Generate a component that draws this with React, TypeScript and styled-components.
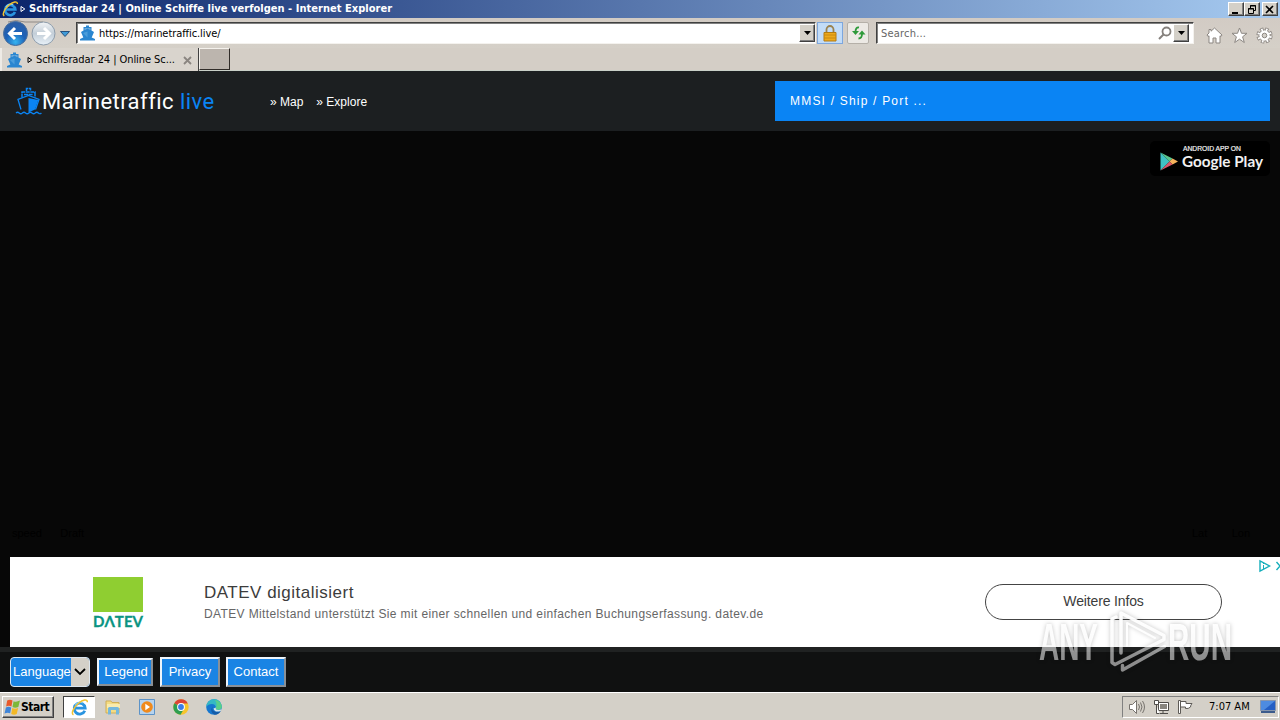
import React from "react";
import styled, { createGlobalStyle } from "styled-components";

const colors = {
  chrome: "#d4d0c8",
  dark: "#1c1f21",
  blue: "#0a84f4",
  button: "#1a84e4",
};

const ui = `"DejaVu Sans Condensed", "DejaVu Sans", sans-serif`;
const arial = `"Liberation Sans", Arial, sans-serif`;
const roboto = `Roboto, sans-serif`;

const GlobalStyle = createGlobalStyle`
  * {
    box-sizing: border-box;
  }
  body {
    margin: 0;
    overflow: hidden;
    background: #070707;
  }
  svg {
    display: block;
    flex: none;
    overflow: visible;
  }
`;

const Screen = styled.div`
  position: relative;
  display: flex;
  flex-direction: column;
  width: 1280px;
  height: 720px;
  overflow: hidden;
`;

const Text = styled.span<{
  $size?: number;
  $spacing?: number;
  $color?: string;
  $bold?: boolean;
  $font?: string;
}>`
  font-family: ${(p) => p.$font || ui};
  font-size: ${(p) => p.$size || 11}px;
  font-weight: ${(p) => (p.$bold ? 700 : 400)};
  letter-spacing: ${(p) => p.$spacing || 0}px;
  color: ${(p) => p.$color || "#000"};
  white-space: pre;
  line-height: 1.2;
`;

/* ---------- window chrome ---------- */

const TitleBar = styled.div`
  display: flex;
  align-items: center;
  flex: none;
  height: 18px;
  padding: 0 2px;
  background: linear-gradient(90deg, #0a246a 0%, #a6caf0 100%);
`;

const TitleText = styled.div`
  display: flex;
  align-items: center;
  flex: 1;
  gap: 3px;
  padding-left: 2px;
`;

const WindowButtons = styled.div`
  display: flex;
  & > :last-child {
    margin-left: 2px;
  }
`;

const WindowButton = styled.div`
  display: flex;
  align-items: center;
  justify-content: center;
  width: 16px;
  height: 14px;
  background: ${colors.chrome};
  border: 1px solid;
  border-color: #fff #404040 #404040 #fff;
  box-shadow: inset -1px -1px #808080;
`;

const NavBar = styled.div`
  display: flex;
  align-items: center;
  flex: none;
  height: 30px;
  padding: 0 7px 0 3px;
  background: linear-gradient(#d2cbc4, #d5d0c8);
`;

const Field = styled.div<{ $width: number; $ml: number; $right?: number }>`
  display: flex;
  align-items: center;
  width: ${(p) => p.$width}px;
  height: 22px;
  margin-left: ${(p) => p.$ml}px;
  padding: 0 ${(p) => p.$right || 0}px 0 3px;
  background: #fff;
  border: 1px solid;
  border-color: #404040 #f4f2ee #f4f2ee #404040;
  box-shadow: inset 1px 1px #808080;
`;

const FieldText = styled.div<{ $left?: number }>`
  display: flex;
  flex: 1;
  padding-left: ${(p) => p.$left || 0}px;
  padding-top: 2px;
`;

const DropButton = styled.div`
  display: flex;
  align-items: center;
  justify-content: center;
  width: 16px;
  height: 18px;
  background: ${colors.chrome};
  border: 1px solid;
  border-color: #fff #404040 #404040 #fff;
  box-shadow: inset -1px -1px #808080;
`;

const ToolButton = styled.div<{ $active?: boolean; $width: number; $ml: number }>`
  display: flex;
  align-items: center;
  justify-content: center;
  width: ${(p) => p.$width}px;
  height: 22px;
  margin-left: ${(p) => p.$ml}px;
  background: ${(p) => (p.$active ? "#c2dcf8" : "#ece9e4")};
  border: 1px solid ${(p) => (p.$active ? "#7da7de" : "#b5b0a8")};
  border-radius: ${(p) => (p.$active ? 0 : 2)}px;
`;

const Tools = styled.div`
  display: flex;
  align-items: center;
  gap: 8px;
  margin-left: 12px;
  padding-top: 4px;
`;

const TabBar = styled.div`
  display: flex;
  flex: none;
  height: 23px;
  background: #d4cec6;
  border-bottom: 1px solid #c9d0c8;
`;

const Tab = styled.div`
  display: flex;
  align-items: center;
  width: 199px;
  height: 23px;
  padding: 1px 6px 0 5px;
  background: #d9d4cd;
  border-left: 2px solid #eeebe6;
  border-right: 1px solid #404040;
`;

const TabTitle = styled.div`
  display: flex;
  align-items: center;
  gap: 3px;
  flex: 1;
  padding-left: 5px;
`;

const NewTab = styled.div`
  width: 31px;
  height: 22px;
  background: #bcb5ae;
  border: 1px solid;
  border-color: #f4f1ec #302c28 #302c28 #f4f1ec;
`;

/* ---------- site ---------- */

const SiteHeader = styled.header`
  display: flex;
  align-items: center;
  flex: none;
  height: 60px;
  padding: 0 10px 0 15px;
  background: ${colors.dark};
`;

const Logo = styled.div`
  display: flex;
  align-items: center;
  width: 255px;
`;

const LogoText = styled.div`
  padding-top: 2px;
`;

const Menu = styled.nav`
  display: flex;
  flex: 1;
  gap: 13px;
  padding-top: 2px;
`;

const SearchBox = styled.div`
  display: flex;
  align-items: center;
  width: 495px;
  height: 40px;
  padding-left: 15px;
  background: ${colors.blue};
`;

const MapArea = styled.main`
  display: flex;
  flex-direction: column;
  align-items: flex-end;
  justify-content: space-between;
  flex: none;
  height: 426px;
  padding: 10px 10px 17px;
  background: #070707;
`;

const PlayBadge = styled.div`
  width: 120px;
  height: 35px;
  background: #000;
  border-radius: 5px;
`;

const MapLabels = styled.div`
  display: flex;
  justify-content: space-between;
  width: 100%;
  padding: 0 20px 0 2px;
`;

const Ad = styled.section`
  display: flex;
  align-items: center;
  flex: none;
  height: 90px;
  margin-left: 10px;
  background: #fff;
`;

const AdLogo = styled.div`
  width: 194px;
  padding: 1px 0 0 83px;
`;

const AdCopy = styled.div`
  display: flex;
  flex-direction: column;
  gap: 4px;
  flex: 1;
`;

const AdButton = styled.div`
  display: flex;
  align-items: center;
  justify-content: center;
  width: 237px;
  height: 36px;
  padding-bottom: 2px;
  border: 1px solid #444;
  border-radius: 18px;
`;

const AdChoices = styled.div`
  display: flex;
  align-self: flex-start;
  width: 58px;
  padding: 3px 0 0 36px;
`;

const Footer = styled.footer`
  display: flex;
  flex: none;
  height: 45px;
  padding: 5px 10px 0;
  background: #101111;
  border-top: 5px solid #202222;
`;

const Language = styled.div`
  display: flex;
  align-items: center;
  width: 80px;
  height: 30px;
  padding-left: 2px;
  margin-right: 7px;
  overflow: hidden;
  background: ${colors.button};
  border: 1px solid #dde6ee;
  border-radius: 4px;
`;

const LanguageLabel = styled.div`
  width: 58px;
  padding-bottom: 2px;
`;

const LanguageArrow = styled.div`
  display: flex;
  align-items: center;
  justify-content: center;
  width: 18px;
  height: 28px;
  background: ${colors.chrome};
`;

const FooterButton = styled.div<{ $width: number; $small?: boolean }>`
  display: flex;
  align-items: center;
  justify-content: center;
  width: ${(p) => p.$width}px;
  height: ${(p) => (p.$small ? 28 : 30)}px;
  margin: ${(p) => (p.$small ? "1px 7px 0 0" : "0 6px 0 0")};
  padding-left: ${(p) => (p.$small ? 2 : 0)}px;
  background: ${colors.button};
  border: 2px solid;
  border-color: #eef4fa #8a9096 #8a9096 #eef4fa;
`;

/* ---------- taskbar ---------- */

const Taskbar = styled.div`
  display: flex;
  align-items: center;
  flex: none;
  height: 28px;
  padding: 1px 1px 0 2px;
  background: ${colors.chrome};
  border-top: 1px solid #fff;
`;

const StartButton = styled.div`
  display: flex;
  align-items: center;
  width: 52px;
  height: 22px;
  padding-left: 1px;
  border: 1px solid;
  border-color: #fff #404040 #404040 #fff;
  box-shadow: inset -1px -1px #808080;
`;

const ActiveApp = styled.div`
  display: flex;
  align-items: center;
  justify-content: center;
  width: 32px;
  height: 22px;
  margin-left: 9px;
  background: #fff;
  border: 1px solid;
  border-color: #404040 #fff #fff #404040;
`;

const Apps = styled.div`
  display: flex;
  align-items: center;
  flex: 1;
  gap: 17.5px;
  padding-left: 8.5px;
`;

const Tray = styled.div`
  display: flex;
  align-items: center;
  width: 157px;
  height: 22px;
  padding-left: 5px;
  border: 1px solid;
  border-color: #808080 #fff #fff #808080;
`;

const TrayIcons = styled.div`
  display: flex;
  gap: 7px;
  width: 81px;
`;

const Monitor = styled.div`
  margin-left: 10px;
`;

const Watermark = styled.div`
  position: absolute;
  left: 1030px;
  top: 600px;
  filter: drop-shadow(0 0 2px rgba(0, 0, 0, 0.25));
`;

/* ---------- icons ---------- */

const IeIcon = ({ size = 17 }: { size?: number }) => (
  <svg width={size} height={size} viewBox="0 0 18 18" fill="none">
    <path
      d="M14.6 12.4A5.8 5.8 0 1 1 15 9.6H5"
      stroke="#2a94e0"
      strokeWidth="3"
    />
    <path d="M12.5 4.2A5.6 5.6 0 0 0 4.4 7" stroke="#7ccbf6" strokeWidth="1.4" />
    <path
      d="M2.6 16.8C-.2 15.4 2.6 9 8 4.5 12.5.8 17.5-.4 17.3 3.4"
      stroke="#f2c230"
      strokeWidth="1.6"
    />
  </svg>
);

const FaviconShip = () => (
  <svg width="15" height="16" viewBox="0 0 15 16">
    <path
      d="M6 .5h3V2h2.5v3.5L14 7l-2.300 5.500L15 14v1.500H0V14l3.300-1.500L1 7l2.500-1.500V2H6z"
      fill="#2a86d0"
    />
    <path d="M4.5 3.400h6v1.400l-3-1-3 1z" fill="#a9cbe6" />
    <path d="M7.5 6.500v6L3 8z" fill="#4b9ddb" />
  </svg>
);

const LogoShip = () => (
  <svg width="27" height="28" viewBox="0 0 27 28" fill="none">
    <path
      d="M11.5 4V1.5h4V4M7 10.5V5h13v5.5M9 7.500h9"
      stroke={colors.blue}
      strokeWidth="1.5"
      strokeDasharray="4 .6"
    />
    <path
      d="M6 22.500l-3-10 10.500-4 10.500 4-3.500 10"
      stroke={colors.blue}
      strokeWidth="1.3"
    />
    <path d="M13.5 11l9.800 2-3.300 9.500-6.500 3z" fill={colors.blue} />
    <path
      d="M1 26q1.600-1.500 3.200 0t3.200 0 3.200 0 3.200 0 3.200 0 3.200 0 3.200 0 3 0"
      stroke={colors.blue}
      strokeWidth="1.2"
    />
  </svg>
);

const NavArrows = () => (
  <svg width="68" height="30" viewBox="0 0 68 30">
    <defs>
      <radialGradient id="back" cx=".5" cy=".85" r=".8">
        <stop offset="0" stopColor="#37b4f0" />
        <stop offset=".5" stopColor="#1d62b8" />
        <stop offset="1" stopColor="#2b5ea6" />
      </radialGradient>
      <linearGradient id="fwd" x2="0" y2="1">
        <stop offset="0" stopColor="#f2f4f6" />
        <stop offset=".5" stopColor="#c3ced8" />
        <stop offset="1" stopColor="#e8f1f8" />
      </linearGradient>
    </defs>
    <path d="M5 4Q13 1 22 4h18" stroke="#8f8a86" fill="none" />
    <circle cx="12.5" cy="15.5" r="12" fill="url(#back)" stroke="#4a6f9c" />
    <path
      d="M19 15.5H7M12 10l-5.5 5.5L12 21"
      stroke="#fff"
      strokeWidth="3"
      fill="none"
    />
    <circle cx="40.5" cy="15.5" r="11.5" fill="url(#fwd)" stroke="#8d9cab" />
    <path
      d="M34 15.5h12M41 10l5.5 5.5L41 21"
      stroke="#fff"
      strokeWidth="3"
      fill="none"
    />
    <path d="M57.5 13.5h9l-4.5 5z" fill="#3f9bd8" stroke="#27517e" />
  </svg>
);

const Caret = () => (
  <svg width="7" height="4" viewBox="0 0 7 4">
    <path d="M0 0h7L3.5 4z" fill="#000" />
  </svg>
);

const Triangle = ({ color }: { color: string }) => (
  <svg width="6" height="8" viewBox="0 0 6 8">
    <path d="M1 1.500v5L4.800 4z" fill="none" stroke={color} />
  </svg>
);

const LockIcon = () => (
  <svg width="14" height="17" viewBox="0 0 14 17">
    <path
      d="M3.5 8V4.500a3.500 3.500 0 0 1 7 0V8"
      fill="none"
      stroke="#9a8250"
      strokeWidth="1.8"
    />
    <path d="M1 7.500h12V16H1z" fill="#eda91c" stroke="#b37b12" />
    <path d="M1 10h12M1 13h12" stroke="#c98a10" />
  </svg>
);

const RefreshIcon = () => (
  <svg width="15" height="14" viewBox="0 0 15 14" fill="none">
    <path d="M8 1.500Q4.500 1 4.500 6" stroke="#2e9a3a" strokeWidth="1.8" />
    <path d="M1 5h7L4.500 9z" fill="#2e9a3a" />
    <path d="M7.500 12.500Q11 12.500 11 8" stroke="#2e9a3a" strokeWidth="1.8" />
    <path d="M7.500 8.500h7l-3.500-4z" fill="#2e9a3a" />
  </svg>
);

const SearchIcon = () => (
  <svg width="15" height="14" viewBox="0 0 15 14" fill="none">
    <circle cx="8.5" cy="5.5" r="4" stroke="#85807c" strokeWidth="1.8" />
    <path d="M5.500 8.500L1 13" stroke="#85807c" strokeWidth="2" />
  </svg>
);

const HomeIcon = () => (
  <svg width="17" height="17" viewBox="0 0 17 17">
    <path
      d="M8.500 1l7.500 7-1 1.500-1-.7V16h-4v-5H7v5H3V8.800l-1 .7L1 8l2-2V2.500h2v1.700z"
      fill="#fff"
      stroke="#8c8782"
    />
  </svg>
);

const StarIcon = () => (
  <svg width="17" height="17" viewBox="0 0 17 17">
    <path
      d="M8.500 1l2 5.300H16l-4.400 3.500 1.700 5.700-4.800-3.300-4.800 3.300 1.700-5.700L1 6.300h5.500z"
      fill="#fff"
      stroke="#8c8782"
    />
  </svg>
);

const GearIcon = () => (
  <svg width="17" height="17" viewBox="0 0 17 17" fill="none">
    <circle cx="8.5" cy="8.5" r="6.4" stroke="#8c8782" strokeWidth="3.4" strokeDasharray="3.2 1.827" />
    <circle cx="8.5" cy="8.5" r="5.6" fill="#fff" stroke="#8c8782" />
    <circle cx="8.5" cy="8.5" r="6" stroke="#fff" strokeWidth="2.6" strokeDasharray="1.6 3.112" strokeDashoffset="-.7" />
    <circle cx="8.5" cy="8.5" r="2.3" fill="#d4d0c8" stroke="#8c8782" />
  </svg>
);

const PlayIcon = () => (
  <svg width="120" height="35" viewBox="0 0 120 35">
    <path d="M10.500 11.500v18l9-9z" fill="#3fc1c4" />
    <path d="M10.500 11.500l12 6-3 3z" fill="#59c58c" />
    <path d="M22.500 17.500l5.500 3-5.500 3-3-3z" fill="#f6b25c" />
    <path d="M10.500 29.500l12-6-3-3z" fill="#d9566a" />
    <text
      x="33"
      y="9.5"
      fill="#eee"
      stroke="#eee"
      strokeWidth=".2"
      fontFamily={arial}
      fontSize="6.5"
      textLength="58"
      lengthAdjust="spacingAndGlyphs"
    >
      ANDROID APP ON
    </text>
    <text
      x="32"
      y="26"
      fill="#f2f2f2"
      fontFamily="Lato, sans-serif"
      fontWeight="700"
      fontSize="15.5"
      textLength="81"
      lengthAdjust="spacingAndGlyphs"
    >
      Google Play
    </text>
  </svg>
);

const DatevLogo = () => (
  <svg width="51" height="52" viewBox="0 0 51 52">
    <path d="M0 0h50v35H0z" fill="#8fce31" />
    <text
      x="0"
      y="49.5"
      fill="#0a9482"
      stroke="#0a9482"
      strokeWidth=".3"
      fontFamily="Lato, sans-serif"
      fontWeight="700"
      fontSize="16"
      textLength="50"
      lengthAdjust="spacingAndGlyphs"
    >
      DΛTEV
    </text>
  </svg>
);

const AdChoicesIcon = () => (
  <svg width="22" height="12" viewBox="0 0 22 12" fill="none">
    <path d="M2 1v10l9.500-5z" stroke="#15aebb" strokeWidth="1.4" />
    <path d="M5.500 5v4M5.500 3v1" stroke="#15aebb" />
    <path d="M18.500 2l7 8M25.500 2l-7 8" stroke="#15aebb" strokeWidth="1.4" />
  </svg>
);

const StartFlag = () => (
  <svg width="17" height="17" viewBox="0 0 16 16">
    <path d="M3 1.500Q5.500 0 8 1.500L7 7Q4.500 5.800 2 7z" fill="#e8592a" />
    <path d="M9 2q2.500 1.200 6-.5l-1.500 6Q10.500 8.800 8 7.500z" fill="#7cb83a" />
    <path d="M1.800 8Q4.300 6.800 6.800 8l-1 5.500Q3.500 12.200.5 13.700z" fill="#3f85d8" />
    <path d="M7.800 8.500q2.500 1.200 5.500 0L12 14q-2.500 1.500-5.200 0z" fill="#f3b927" />
  </svg>
);

const ExplorerIcon = () => (
  <svg width="18" height="16" viewBox="0 0 18 16">
    <path d="M2 2h5l1 1.500h7V14H2z" fill="#f4dc83" stroke="#cfae58" />
    <path d="M3 5h13v4H3z" fill="#f9ebae" />
    <path
      d="M4 15.500v-6Q4 8 5.500 8h8Q15 8 15 9.500v6h-3V11H7v4.500z"
      fill="#75b8dc"
    />
  </svg>
);

const MediaIcon = () => (
  <svg width="16" height="16" viewBox="0 0 16 16">
    <path d="M.5.5h15v15H.5z" fill="#b6d3ee" stroke="#5c93c8" />
    <circle cx="8" cy="8" r="5.8" fill="#f08a1c" />
    <path d="M6.300 4.700v6.600L11 8z" fill="#fff" />
  </svg>
);

const ChromeIcon = () => (
  <svg width="16" height="16" viewBox="0 0 16 16">
    <circle cx="8" cy="8" r="7.7" fill="#f7c52b" />
    <path d="M8 8L1.300 4.200A7.700 7.700 0 0 1 14.800 4.500H8z" fill="#dc4437" />
    <path d="M1.300 4.200A7.700 7.700 0 0 0 7.500 15.700L11 9.800 8 8z" fill="#2f9e50" />
    <circle cx="8" cy="8" r="3.9" fill="#fff" />
    <circle cx="8" cy="8" r="2.9" fill="#3b7de8" />
  </svg>
);

const EdgeIcon = () => (
  <svg width="16" height="16" viewBox="0 0 16 16">
    <circle cx="8" cy="8" r="7.8" fill="#1677cf" />
    <path
      d="M.3 8A7.700 7.700 0 0 1 15.800 7.500q0 3-3.300 3.300-3 0-2.500-2Q9.500 5 6 5 2 5 .3 8z"
      fill="#35b8c4"
    />
    <path
      d="M9 1q6 .6 6.800 6.500 0 3-3.300 3.300-3 0-2.500-2Q11.500 5 9 1z"
      fill="#59cf8a"
    />
    <path
      d="M6.500 7.500Q5 12 10.500 13q2.500.2 4.300-1.300-2 4-6 4Q3 13 6.500 7.500z"
      fill="#145ca8"
    />
    <path
      d="M10 8.500q-1 2.500 2.500 2.400 2 0 3-1.200l-.8 2.300Q8.500 14 7.500 9.500z"
      fill="#d9e5e8"
    />
  </svg>
);

const SpeakerIcon = () => (
  <svg width="18" height="16" viewBox="0 0 18 16" fill="none" stroke="#77736e">
    <path d="M1.500 5.500h3l4-4v13l-4-4h-3z" fill="#fff" />
    <path d="M10.500 5q2 3 0 6M12.500 3.500q3 4.500 0 9M14.500 2q4 6 0 12" />
  </svg>
);

const NetworkIcon = () => (
  <svg width="17" height="16" viewBox="0 0 17 16" fill="none" stroke="#4f4c49">
    <path d="M5.500 3.500h10v8h-10z" fill="#fff" />
    <path d="M7 5h7v5H7z" fill="#88857f" stroke="none" />
    <path d="M7 14.500h8M10 12v2" />
    <path d="M1.500 1.500h4v4h-4zM3.500 6v8.500h3" fill="#fff" />
  </svg>
);

const FlagIcon = () => (
  <svg width="17" height="16" viewBox="0 0 17 16" stroke="#5e5b57" fill="#fff">
    <path d="M1.500 1.500h2v13h-2zM3.500 2.500H9v2h6q-1.500 1.500-1.500 3.500-2 2-5 1.500V8h-5z" />
  </svg>
);

const MonitorIcon = () => (
  <svg width="16" height="14" viewBox="0 0 16 14">
    <path d="M.5.5h15v10H.5z" fill="#245fc4" stroke="#8796ad" />
    <path d="M1 1h14L4 10H1z" fill="#4d8be0" />
    <path d="M1 12h14" stroke="#3c5b8c" strokeWidth="2" />
  </svg>
);

const WatermarkMark = () => (
  <svg width="220" height="80" viewBox="0 0 220 80" fill="none">
    <defs>
      <linearGradient id="fade" x1="0" y1="0" x2="0" y2="80" gradientUnits="userSpaceOnUse">
        <stop offset="0" stopColor="#fff" />
        <stop offset=".58" stopColor="#fff" stopOpacity=".9" />
        <stop offset=".59" stopColor="#fff" stopOpacity=".55" />
        <stop offset="1" stopColor="#fff" stopOpacity=".5" />
      </linearGradient>
    </defs>
    <g fill="url(#fade)" fontFamily={arial} fontWeight="700" fontSize="52">
      <text x="9" y="59.5" textLength="59" lengthAdjust="spacingAndGlyphs">
        ANY
      </text>
      <text x="138" y="59.5" textLength="64" lengthAdjust="spacingAndGlyphs">
        RUN
      </text>
    </g>
    <g
      stroke="url(#fade)"
      strokeWidth="3.5"
      strokeLinejoin="round"
      strokeLinecap="round"
    >
      <path d="M91 53V13l43 22.500v4L85 64.500l-3-2V19l4-2" />
      <path d="M97 46V23l28 15" strokeWidth="2" />
      <path d="M92.500 65.500v4.500l42-23.500" />
    </g>
  </svg>
);

export default function App() {
  return (
    <>
      <GlobalStyle />
      <Screen>
        <TitleBar>
          <IeIcon size={16} />
          <TitleText>
            <Triangle color="#fff" />
            <Text $bold $color="#fff" $spacing={0.03}>
              Schiffsradar 24 | Online Schiffe live verfolgen - Internet Explorer
            </Text>
          </TitleText>
          <WindowButtons>
            <WindowButton>
              <svg width="10" height="9">
                <path d="M1 7h6v2H1z" />
              </svg>
            </WindowButton>
            <WindowButton>
              <svg width="10" height="9" fill="none" stroke="#000">
                <path d="M3.500 3V.5h5v5h-2M3 1h6M1.500 3.500h5v5h-5zM1 4h6" />
              </svg>
            </WindowButton>
            <WindowButton>
              <svg width="10" height="9" stroke="#000" strokeWidth="1.6">
                <path d="M1 1l7 7M8 1L1 8" />
              </svg>
            </WindowButton>
          </WindowButtons>
        </TitleBar>

        <NavBar>
          <NavArrows />
          <Field $width={740} $ml={5}>
            <FaviconShip />
            <FieldText $left={4}>
              <Text $spacing={-0.07}>https://marinetraffic.live/</Text>
            </FieldText>
            <DropButton>
              <Caret />
            </DropButton>
          </Field>
          <ToolButton $active $width={26} $ml={1}>
            <LockIcon />
          </ToolButton>
          <ToolButton $width={22} $ml={4}>
            <RefreshIcon />
          </ToolButton>
          <Field $width={318} $ml={7} $right={4}>
            <FieldText $left={1}>
              <Text $color="#666" $spacing={0.2}>
                Search...
              </Text>
            </FieldText>
            <SearchIcon />
            <DropButton>
              <Caret />
            </DropButton>
          </Field>
          <Tools>
            <HomeIcon />
            <StarIcon />
            <GearIcon />
          </Tools>
        </NavBar>

        <TabBar>
          <Tab>
            <FaviconShip />
            <TabTitle>
              <Triangle color="#000" />
              <Text $spacing={-0.07}>Schiffsradar 24 | Online Sc...</Text>
            </TabTitle>
            <svg width="9" height="9" stroke="#8a8580" strokeWidth="1.8">
              <path d="M1 1l7 7M8 1L1 8" />
            </svg>
          </Tab>
          <NewTab />
        </TabBar>

        <SiteHeader>
          <Logo>
            <LogoShip />
            <LogoText>
              <Text $font={roboto} $size={22} $spacing={0.45} $color="#fff">
                Marinetraffic{" "}
              </Text>
              <Text $font={roboto} $size={22} $spacing={0.45} $color={colors.blue}>
                live
              </Text>
            </LogoText>
          </Logo>
          <Menu>
            <Text $font={arial} $size={12} $color="#fff">» Map</Text>
            <Text $font={arial} $size={12} $color="#fff">» Explore</Text>
          </Menu>
          <SearchBox>
            <Text $font={arial} $size={12} $spacing={1.2} $color="#fff">
              MMSI / Ship / Port ...
            </Text>
          </SearchBox>
        </SiteHeader>

        <MapArea>
          <PlayBadge>
            <PlayIcon />
          </PlayBadge>
          <MapLabels>
            <Text $font={arial}>{"speed      Draft"}</Text>
            <Text $font={arial}>{"Lat        Lon"}</Text>
          </MapLabels>
        </MapArea>

        <Ad>
          <AdLogo>
            <DatevLogo />
          </AdLogo>
          <AdCopy>
            <Text $font={arial} $size={17} $spacing={0.5} $color="#3c3c3c">
              DATEV digitalisiert
            </Text>
            <Text $font={arial} $size={12} $spacing={0.375} $color="#666">
              DATEV Mittelstand unterstützt Sie mit einer schnellen und einfachen Buchungserfassung. datev.de
            </Text>
          </AdCopy>
          <AdButton>
            <Text $font={arial} $size={14} $spacing={-0.15} $color="#3c3c3c">
              Weitere Infos
            </Text>
          </AdButton>
          <AdChoices>
            <AdChoicesIcon />
          </AdChoices>
        </Ad>

        <Footer>
          <Language>
            <LanguageLabel>
              <Text $font={arial} $size={13} $color="#fff">Language</Text>
            </LanguageLabel>
            <LanguageArrow>
              <svg width="12" height="8" fill="none" stroke="#000" strokeWidth="1.8">
                <path d="M1 1l5 5 5-5" />
              </svg>
            </LanguageArrow>
          </Language>
          <FooterButton $width={56} $small>
            <Text $font={arial} $size={13} $color="#fff">Legend</Text>
          </FooterButton>
          <FooterButton $width={60}>
            <Text $font={arial} $size={13} $color="#fff">Privacy</Text>
          </FooterButton>
          <FooterButton $width={60}>
            <Text $font={arial} $size={13} $color="#fff">Contact</Text>
          </FooterButton>
        </Footer>

        <Taskbar>
          <StartButton>
            <StartFlag />
            <Text $bold $size={12} $spacing={-0.5}>Start</Text>
          </StartButton>
          <ActiveApp>
            <IeIcon />
          </ActiveApp>
          <Apps>
            <ExplorerIcon />
            <MediaIcon />
            <ChromeIcon />
            <EdgeIcon />
          </Apps>
          <Tray>
            <TrayIcons>
              <SpeakerIcon />
              <NetworkIcon />
              <FlagIcon />
            </TrayIcons>
            <Text>7:07 AM</Text>
            <Monitor>
              <MonitorIcon />
            </Monitor>
          </Tray>
        </Taskbar>

        <Watermark>
          <WatermarkMark />
        </Watermark>
      </Screen>
    </>
  );
}
